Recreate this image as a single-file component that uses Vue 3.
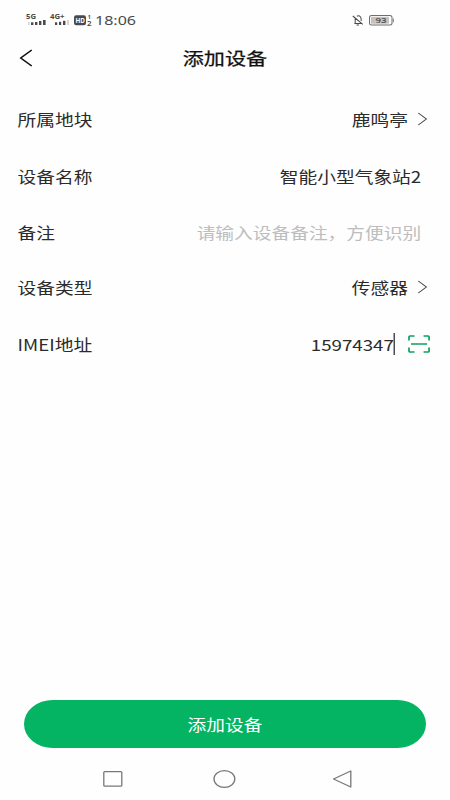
<script setup>
import { ref } from 'vue'

const rows = ref([
  { label: '所属地块', value: '鹿鸣亭', kind: 'select', size: 'tall' },
  { label: '设备名称', value: '智能小型气象站2', kind: 'text', size: 'tall' },
  { label: '备注', value: '请输入设备备注，方便识别', kind: 'placeholder', size: 'short' },
  { label: '设备类型', value: '传感器', kind: 'select', size: 'short' },
  { label: 'IMEI地址', value: '15974347', kind: 'scan', size: 'last' }
])
</script>

<template>
  <div class="screen">
    <svg class="status" viewBox="0 0 450 36" preserveAspectRatio="none">
      <g fill="#4a4a4a">
        <text x="26" y="19.3" font-size="7" font-weight="700" textLength="10" lengthAdjust="spacingAndGlyphs">5G</text>
        <rect x="28" y="22" width="1.6" height="3" fill="#d5d5d5" />
        <rect x="31" y="22.3" width="2.4" height="2.7" />
        <rect x="35" y="22" width="2.4" height="3" />
        <rect x="39" y="21" width="2.4" height="4" />
        <rect x="43" y="20" width="2.6" height="5" />
        <text x="50" y="19.3" font-size="7" font-weight="700" textLength="14.5" lengthAdjust="spacingAndGlyphs">4G+</text>
        <rect x="55" y="22.3" width="2.2" height="2.7" />
        <rect x="59" y="21.8" width="2.2" height="3.2" />
        <rect x="63" y="20.8" width="2.4" height="4.2" />
        <rect x="67" y="20" width="2" height="5" fill="#d5d5d5" />
        <rect x="74" y="15.3" width="12" height="10" rx="2.2" />
        <text x="75.4" y="23.2" font-size="7.5" font-weight="700" fill="#fff" textLength="9.4" lengthAdjust="spacingAndGlyphs">HD</text>
        <text x="87.8" y="19.4" font-size="5.4" font-weight="700">1</text>
        <text x="87" y="25.6" font-size="6.2" font-weight="600" textLength="4.6" lengthAdjust="spacingAndGlyphs">2</text>
        <text x="95" y="25" font-size="12.8" textLength="41" lengthAdjust="spacingAndGlyphs">18:06</text>
      </g>
      <g fill="none" stroke="#4a4a4a" stroke-width="1">
        <path d="M354.4 23.4H361M355.2 23.2V18.4M356.8 16.2Q359 15.2 360.6 17Q361.3 18.2 361.2 21M352.8 16L362.8 24.4M356.5 25H359" />
        <rect x="369.5" y="15.5" width="22.5" height="9.6" rx="2" fill="#fff" stroke="#6d6d6d" />
        <path d="M393.3 18.4v3.8" stroke="#777" />
      </g>
      <rect x="370.8" y="16.8" width="18.2" height="7" rx="1" fill="#c2c2c2" />
      <text x="375.5" y="23.3" font-size="7.8" font-weight="500" fill="#444" textLength="11" lengthAdjust="spacingAndGlyphs">93</text>
    </svg>

    <header class="header">
      <svg class="back" viewBox="0 0 12 18" preserveAspectRatio="none">
        <path d="M11.4 1L1.4 9L11.4 17" fill="none" stroke="#111" stroke-width="1.5" />
      </svg>
      <h1>添加设备</h1>
    </header>

    <main class="form">
      <div v-for="row in rows" :key="row.label" class="row" :class="[row.size, row.kind]">
        <span>{{ row.label }}</span>
        <div class="field">
          <span class="value">{{ row.value }}</span>
          <i v-if="row.kind === 'scan'" class="caret"></i>
          <svg v-if="row.kind === 'select'" class="chevron" viewBox="0 0 8 14" preserveAspectRatio="none">
            <path d="M.6 1L7.3 7L.6 13" fill="none" stroke="#444" stroke-width="1" />
          </svg>
          <svg v-if="row.kind === 'scan'" class="scan" viewBox="0 0 22 18" preserveAspectRatio="none">
            <path d="M1 5.4V2Q1 1 2 1H6.5M15.5 1H20Q21 1 21 2V5.4M21 12.6V16Q21 17 20 17H15.5M6.5 17H2Q1 17 1 16V12.6M3 9H19" fill="none" stroke="#0ca25d" stroke-width="1.7" />
          </svg>
        </div>
      </div>
    </main>

    <button class="submit">添加设备</button>

    <nav class="nav">
      <svg viewBox="0 0 24 20" preserveAspectRatio="none"><rect x="3" y="2.6" width="18" height="14.6" rx="1" /></svg>
      <svg viewBox="0 0 24 20" preserveAspectRatio="none"><ellipse cx="12" cy="10" rx="10.4" ry="8.4" /></svg>
      <svg viewBox="0 0 24 20" preserveAspectRatio="none"><path d="M3.5 10L20.8 2V18Z" stroke-linejoin="round" /></svg>
    </nav>
  </div>
</template>

<style>
body {
  margin: 0;
  overflow: hidden;
  background: #fff;
}
</style>

<style scoped>
.screen {
  display: flex;
  flex-direction: column;
  width: 375px;
  height: 800px;
  overflow: hidden;
  background: #fefefe;
  color: #2b2b2b;
  font-family: "Noto Sans CJK SC", sans-serif;
  font-size: 15.6px;
  line-height: 24px;
  transform: scaleX(1.2);
  transform-origin: 0 0;
}
.status {
  flex: none;
  width: 375px;
  height: 36px;
  font-family: "Noto Sans", sans-serif;
}
.header {
  display: grid;
  grid-template-columns: 28px 1fr 28px;
  align-items: center;
  box-sizing: border-box;
  height: 54px;
  padding: 0 16px 10px;
}
.back {
  width: 11px;
  height: 18px;
}
h1 {
  margin: 0;
  color: #111;
  font-size: 17.6px;
  font-weight: 400;
  line-height: 26px;
  text-align: center;
  -webkit-text-stroke: 0.25px #111;
}
.form {
  flex: 1;
}
.row {
  display: flex;
  align-items: center;
  justify-content: space-between;
  box-sizing: border-box;
  padding: 0 24px 0 14.6px;
}
.tall {
  height: 57px;
}
.short {
  height: 55px;
}
.last {
  height: 59px;
}
.select {
  padding-right: 19px;
}
.scan.row {
  padding-right: 16.4px;
}
.field {
  display: flex;
  align-items: center;
}
.placeholder .value {
  color: #bdbdc0;
}
.chevron {
  width: 8px;
  height: 14px;
  margin-left: 8px;
}
.caret {
  width: 1px;
  height: 22px;
  background: #222;
}
svg.scan {
  width: 18.4px;
  height: 18px;
  margin-left: 11px;
}
.submit {
  flex: none;
  height: 48px;
  margin: 0 20px 10px;
  padding: 0;
  border: 0;
  border-radius: 24px;
  background: #04b462;
  color: #fff;
  font: inherit;
}
.nav {
  display: grid;
  flex: none;
  grid-template-columns: 93.5px 97.5px 20px;
  align-items: center;
  height: 42px;
  padding-left: 83.8px;
}
.nav svg {
  width: 20px;
  height: 20px;
  fill: none;
  stroke: #777;
  stroke-width: 1.3;
}
</style>
